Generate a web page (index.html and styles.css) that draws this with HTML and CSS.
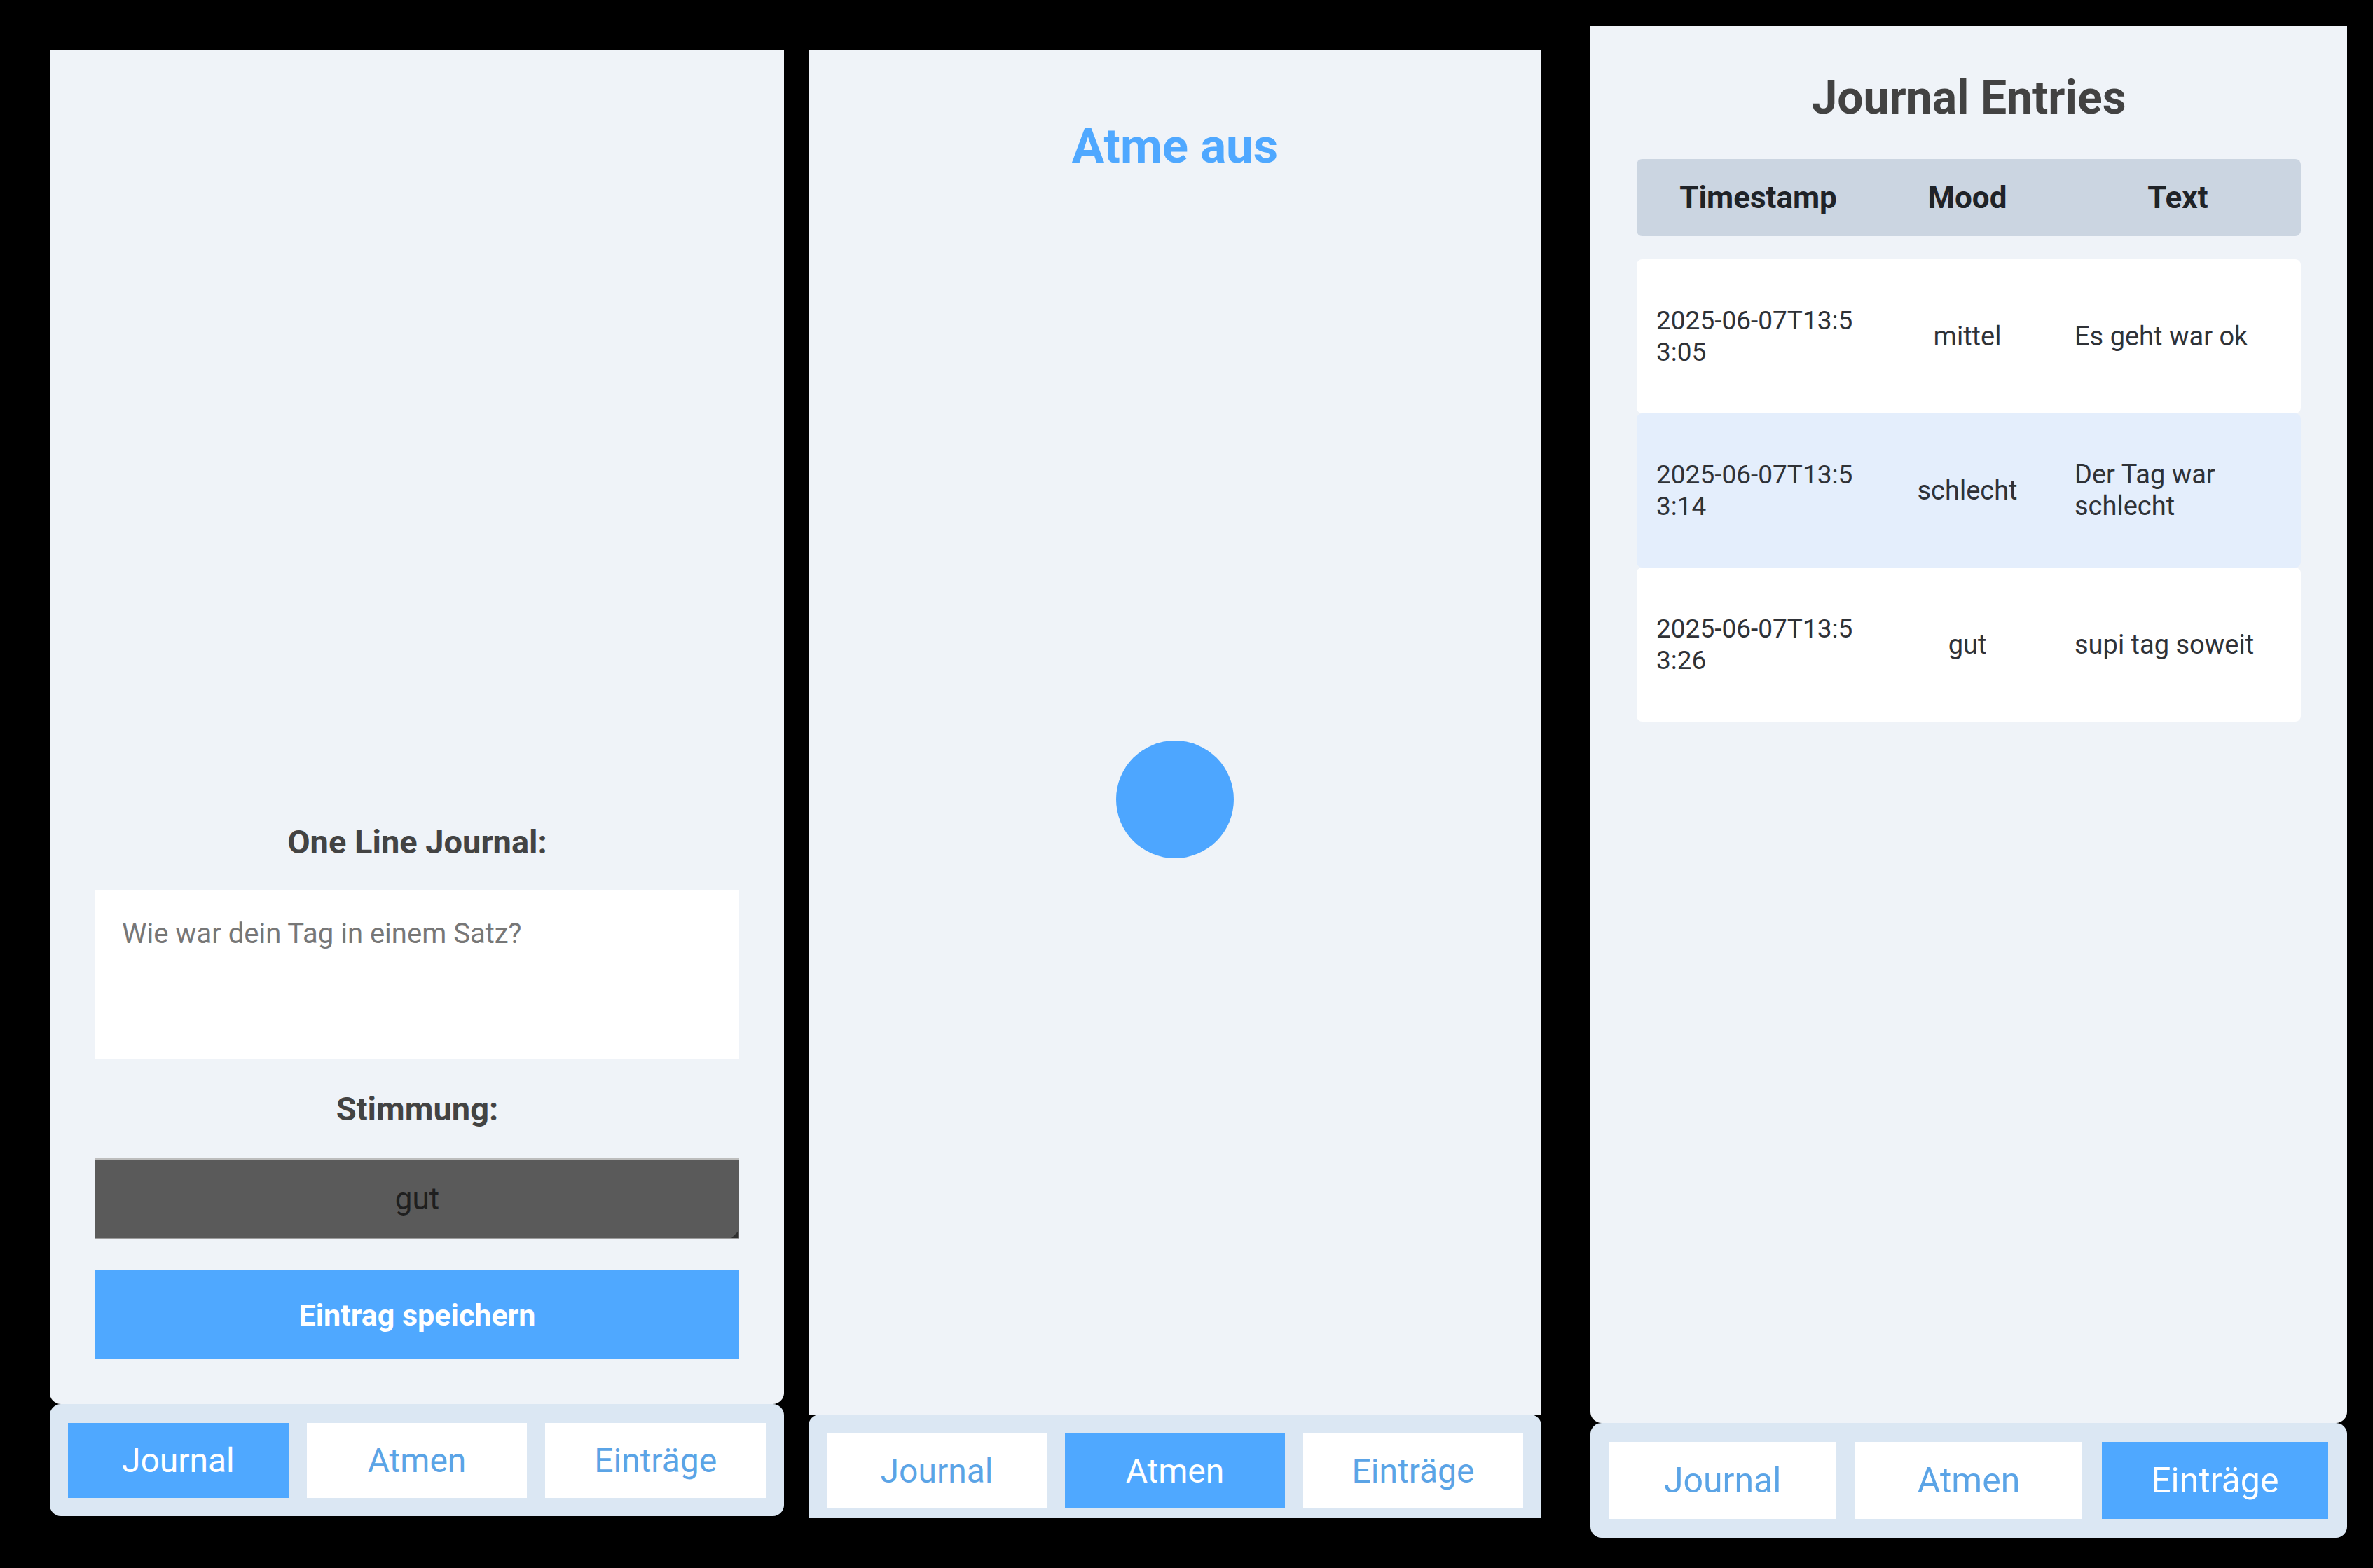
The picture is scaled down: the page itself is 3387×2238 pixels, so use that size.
FILE: index.html
```html
<!DOCTYPE html>
<html lang="de">
<head>
<meta charset="utf-8">
<title>One Line Journal</title>
<link rel="stylesheet" href="styles.css">
</head>
<body>
<div class="stage">
  <section class="phone phone-journal">
    <main class="screen screen-journal">
      <label class="label" for="entry">One Line Journal:</label>
      <textarea id="entry" class="entry" placeholder="Wie war dein Tag in einem Satz?"></textarea>
      <label class="label label-mood" for="mood">Stimmung:</label>
      <div class="select-wrap">
        <select id="mood" class="mood">
          <option>gut</option>
          <option>mittel</option>
          <option>schlecht</option>
        </select>
      </div>
      <button class="save">Eintrag speichern</button>
    </main>
    <nav class="tabs tabs-journal">
      <button class="tab active">Journal</button>
      <button class="tab">Atmen</button>
      <button class="tab">Einträge</button>
    </nav>
  </section>

  <section class="phone phone-breathe">
    <main class="screen screen-breathe">
      <h2 class="breathe-title">Atme aus</h2>
      <div class="breathe-circle"></div>
    </main>
    <nav class="tabs tabs-breathe">
      <button class="tab">Journal</button>
      <button class="tab active">Atmen</button>
      <button class="tab">Einträge</button>
    </nav>
  </section>

  <section class="phone phone-entries">
    <main class="screen screen-entries">
      <h2 class="entries-title">Journal Entries</h2>
      <div class="table">
        <div class="thead">
          <div class="th">Timestamp</div>
          <div class="th">Mood</div>
          <div class="th">Text</div>
        </div>
        <div class="tr">
          <div class="td td-time">2025-06-07T13:53:05</div>
          <div class="td td-mood">mittel</div>
          <div class="td td-text">Es geht war ok</div>
        </div>
        <div class="tr tr-alt">
          <div class="td td-time">2025-06-07T13:53:14</div>
          <div class="td td-mood">schlecht</div>
          <div class="td td-text">Der Tag war schlecht</div>
        </div>
        <div class="tr">
          <div class="td td-time">2025-06-07T13:53:26</div>
          <div class="td td-mood">gut</div>
          <div class="td td-text">supi tag soweit</div>
        </div>
      </div>
    </main>
    <nav class="tabs tabs-entries">
      <button class="tab">Journal</button>
      <button class="tab">Atmen</button>
      <button class="tab active">Einträge</button>
    </nav>
  </section>
</div>
</body>
</html>
```

FILE: styles.css
```css
html, body {
  margin: 0;
  padding: 0;
  background: #000;
}

body {
  width: 3387px;
  height: 2238px;
  overflow: hidden;
  font-family: Roboto, "Noto Sans", "Liberation Sans", sans-serif;
}

.stage {
  display: flex;
  align-items: flex-start;
  padding-left: 71px;
}

.phone {
  display: flex;
  flex-direction: column;
}

.screen {
  background: #eff3f8;
  box-sizing: border-box;
}

/* ---------- Tabs ---------- */
.tabs {
  display: flex;
  background: #dbe7f3;
  box-sizing: border-box;
}

.tab {
  flex: 1 1 0;
  border: none;
  margin: 0;
  padding: 0;
  background: #fff;
  color: #5ba4e6;
  font-family: Roboto, "Noto Sans", sans-serif;
  font-size: 48px;
  font-weight: 400;
}

.tab.active {
  background: #4fa8ff;
  color: #fff;
}

/* ---------- Journal phone ---------- */
.phone-journal {
  width: 1048px;
  margin-top: 71px;
}

.screen-journal {
  height: 1933px;
  display: flex;
  flex-direction: column;
  justify-content: flex-end;
  padding: 0 64px 64px 65px;
  border-radius: 0 0 16px 16px;
}

.label {
  display: block;
  text-align: center;
  font-size: 47px;
  line-height: 52px;
  font-weight: 700;
  color: #434343;
}

.entry {
  display: block;
  margin-top: 43px;
  height: 240px;
  width: 100%;
  box-sizing: border-box;
  border: none;
  background: #fff;
  padding: 38px 38px;
  font-family: Roboto, "Noto Sans", sans-serif;
  font-size: 40px;
  color: #333;
  resize: none;
  outline: none;
}

.entry::placeholder {
  color: #777;
}

.label-mood {
  margin-top: 46px;
}

.select-wrap {
  position: relative;
  margin-top: 44px;
  height: 116px;
}

.select-wrap::after {
  content: "";
  position: absolute;
  right: 1px;
  bottom: 2px;
  width: 0;
  height: 0;
  border-left: 10px solid transparent;
  border-bottom: 10px solid #2f2f2f;
}

.mood {
  -webkit-appearance: none;
  appearance: none;
  display: block;
  width: 100%;
  height: 116px;
  box-sizing: border-box;
  background: #5a5a5a;
  border: none;
  border-top: 2px solid #bdbdbd;
  border-bottom: 2px solid #9c9c9c;
  border-radius: 0;
  color: #1f1f1f;
  font-family: Roboto, "Noto Sans", sans-serif;
  font-size: 44px;
  text-align: center;
  text-align-last: center;
  padding: 0;
}

.save {
  display: block;
  margin-top: 44px;
  height: 127px;
  width: 100%;
  border: none;
  background: #4fa8ff;
  color: #fff;
  font-family: Roboto, "Noto Sans", sans-serif;
  font-size: 43px;
  font-weight: 700;
}

.tabs-journal {
  height: 160px;
  padding: 27px 26px 26px;
  gap: 26px;
  border-radius: 16px;
}

/* ---------- Breathe phone ---------- */
.phone-breathe {
  width: 1046px;
  margin-left: 35px;
  margin-top: 71px;
}

.screen-breathe {
  height: 1948px;
  display: flex;
  flex-direction: column;
  align-items: center;
  padding-top: 98px;
}

.breathe-title {
  margin: 0;
  font-size: 69px;
  line-height: 80px;
  font-weight: 700;
  color: #4fa8ff;
}

.breathe-circle {
  margin-top: 808px;
  width: 168px;
  height: 168px;
  border-radius: 50%;
  background: #4da6ff;
}

.tabs-breathe {
  height: 147px;
  padding: 27px 26px 14px;
  gap: 26px;
  border-radius: 16px 16px 0 0;
}

/* ---------- Entries phone ---------- */
.phone-entries {
  width: 1080px;
  margin-left: 70px;
  margin-top: 37px;
}

.screen-entries {
  height: 1994px;
  padding: 64px 66px 0;
  border-radius: 0 0 16px 16px;
}

.entries-title {
  margin: 0;
  text-align: center;
  font-size: 66px;
  line-height: 78px;
  font-weight: 700;
  color: #424242;
}

.table {
  margin-top: 48px;
}

.thead,
.tr {
  display: grid;
  grid-template-columns: 347px 250px 351px;
  align-items: center;
  border-radius: 8px;
}

.thead {
  height: 110px;
  background: #cbd5e1;
  margin-bottom: 33px;
}

.th {
  text-align: center;
  font-size: 44px;
  font-weight: 700;
  color: #1f2328;
}

.tr {
  height: 220px;
  background: #fff;
}

.tr-alt {
  background: #e4eefc;
}

.td {
  padding: 0 28px;
  font-size: 38px;
  line-height: 45px;
  color: #2f3237;
}

.td-time {
  font-size: 37px;
  word-break: break-all;
}

.td-mood {
  text-align: center;
}

.tabs-entries {
  height: 164px;
  padding: 27px;
  gap: 28px;
  border-radius: 16px;
}

.tabs-entries .tab {
  font-size: 50px;
}
```
